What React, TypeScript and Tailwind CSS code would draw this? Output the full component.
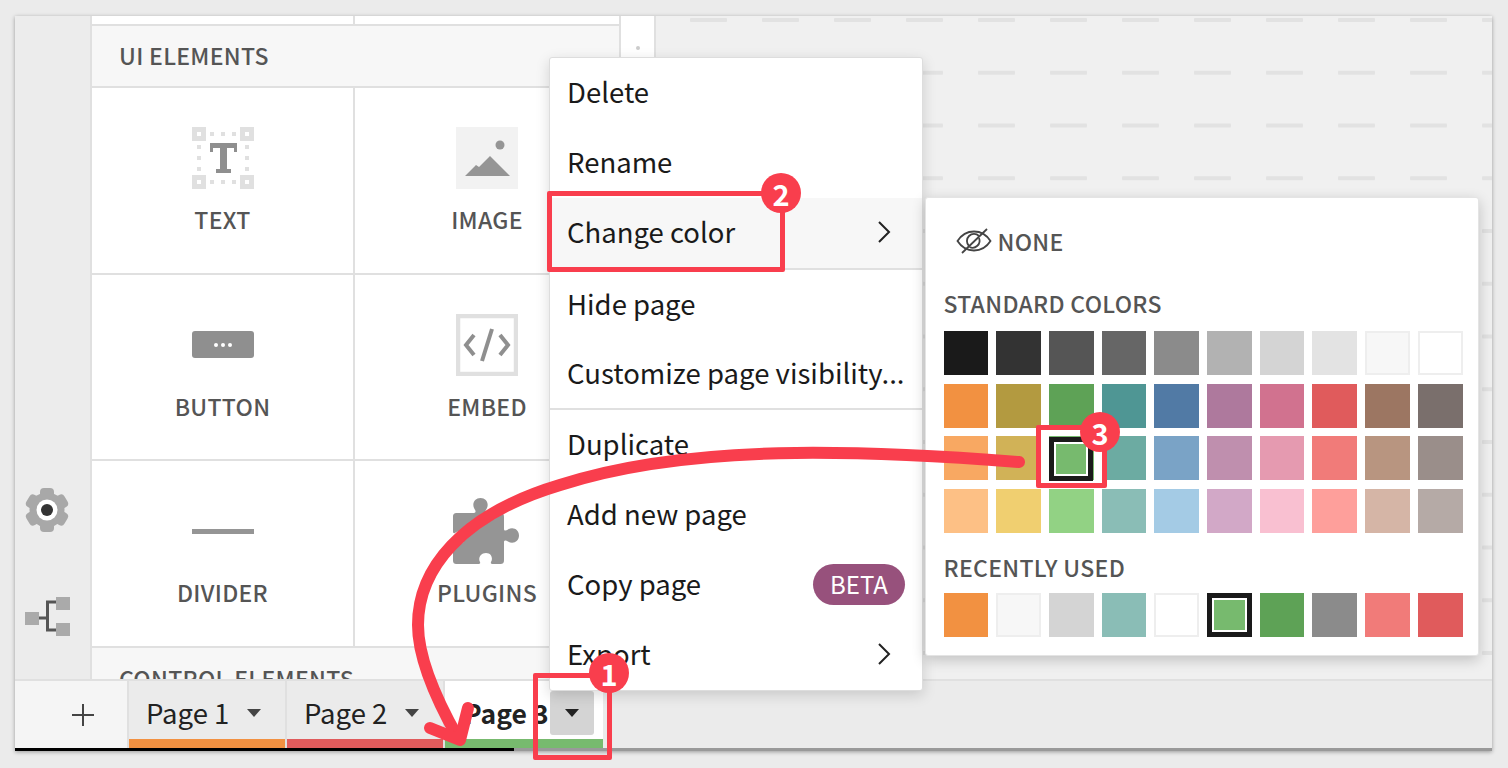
const standardColors = [
  ['#1a1a1a', '#333333', '#555555', '#666666', '#8b8b8b', '#b2b2b2', '#d4d4d4', '#e3e3e3', '#f7f7f7', '#ffffff'],
  ['#f29141', '#b39a40', '#5ea256', '#4f9694', '#517aa5', '#ae799d', '#d1728f', '#e05b5c', '#9c7662', '#7a6f6c'],
  ['#f8a862', '#d1b257', '#77ba6e', '#6caba2', '#7aa3c6', '#bf8fae', '#e59ab0', '#f17b79', '#b89580', '#9a8e8a'],
  ['#fdc085', '#f0cf70', '#92d284', '#8abdb6', '#a4cbe5', '#d2a8c7', '#f9c0d1', '#fe9f9b', '#d5b5a6', '#b5aaa6'],
];

const recentColors = ['#f29141', '#f7f7f7', '#d4d4d4', '#8abdb6', '#ffffff', '#77ba6e', '#5ea256', '#8b8b8b', '#f17b79', '#e05b5c'];

function Swatch({ color, selected }: { color: string; selected?: boolean }) {
  const pale = color === '#f7f7f7' || color === '#ffffff';
  if (selected) {
    return (
      <div className="h-11 border-[5px] border-[#1a1a1a] bg-white p-[2px]">
        <div className="h-full w-full" style={{ backgroundColor: color }} />
      </div>
    );
  }
  return (
    <div
      className={pale ? 'h-11 border-2 border-[#eeeeee]' : 'h-11'}
      style={{ backgroundColor: color }}
    />
  );
}

function TextIcon() {
  return (
    <svg width="62" height="62" viewBox="0 0 62 62">
      <g fill="#e0e0e0">
        <path fillRule="evenodd" d="M0 0h14v14H0zM5 5v4h4V5z" />
        <path fillRule="evenodd" d="M48 0h14v14H48zM53 5v4h4V5z" />
        <path fillRule="evenodd" d="M0 48h14v14H0zM5 53v4h4v-4z" />
        <path fillRule="evenodd" d="M48 48h14v14H48zM53 53v4h4v-4z" />
        {[18, 29, 40].map((p) => (
          <g key={p}>
            <rect x={p} y="5" width="4" height="4" />
            <rect x={p} y="53" width="4" height="4" />
            <rect x="5" y={p} width="4" height="4" />
            <rect x="53" y={p} width="4" height="4" />
          </g>
        ))}
      </g>
      <path
        fill="#8f8f8f"
        d="M18 16h27v9h-3v-4h-7v21h4v4H24v-4h4V21h-7v4h-3z"
      />
    </svg>
  );
}

function ImageIcon() {
  return (
    <svg width="62" height="62" viewBox="0 0 62 62">
      <rect width="62" height="62" fill="#f2f2f2" />
      <circle cx="44" cy="18" r="4.500" fill="#959595" />
      <path fill="#959595" d="M9 49l11-11 3 2 11-11 20 20z" />
    </svg>
  );
}

function ButtonIcon() {
  return (
    <div className="flex h-[27px] w-[62px] items-center justify-center gap-[3px] rounded-[3px] bg-[#8f8f8f]">
      <span className="h-1 w-1 rounded-full bg-white" />
      <span className="h-1 w-1 rounded-full bg-white" />
      <span className="h-1 w-1 rounded-full bg-white" />
    </div>
  );
}

function EmbedIcon() {
  return (
    <svg width="62" height="62" viewBox="0 0 62 62">
      <rect x="2" y="2" width="58" height="58" fill="#fff" stroke="#e0e0e0" strokeWidth="4.500" />
      <g fill="none" stroke="#8f8f8f" strokeWidth="4">
        <path d="M18 21L10 31l8 10" />
        <path d="M44 21l8 10-8 10" />
        <path d="M36 15l-10 32" />
      </g>
    </svg>
  );
}

function PuzzleIcon() {
  return (
    <svg width="68" height="68" viewBox="0 0 68 68">
      <path
        fill="#959595"
        d="M4 16h17c2 0 2-2 .500-4-3-5 0-11 6-11s9 6 6 11c-1.500 2-1.500 4 .500 4h13c3 0 4 1 4 4v12c0 2 2 2 4 .500 5-3 11 0 11 6s-6 9-11 6c-2-1.500-4-1.500-4 .500v18c0 3-1 4-4 4H39c-1 0-1.500-1-1-2 2-3 1-9-5-9s-8 6-6 9c.500 1 0 2-1 2H4c-3 0-4-1-4-4V47c0-1 1-1.500 2-1 3 2 9 2 10-5 .500-6-6-8-10-5-1 .500-2 0-2-1V20c0-3 1-4 4-4z"
      />
    </svg>
  );
}

function GearIcon() {
  return (
    <svg width="44" height="46" viewBox="0 0 44 46">
      <g fill="#a8a8a8">
        <circle cx="22" cy="23" r="17.500" />
        {[0, 60, 120, 180, 240, 300].map((a) => (
          <rect key={a} x="15" y="1" width="14" height="12" rx="4" transform={`rotate(${a} 22 23)`} />
        ))}
      </g>
      <circle cx="22" cy="23" r="10.500" fill="#fff" />
      <circle cx="22" cy="23" r="6" fill="#333" />
    </svg>
  );
}

function TreeIcon() {
  return (
    <svg width="46" height="42" viewBox="0 0 46 42">
      <path fill="none" stroke="#555" strokeWidth="3" d="M14 22h8.500M32 6H22.500v28H32" />
      <rect x="0" y="16" width="14" height="13" fill="#aaa" />
      <rect x="31" y="1" width="14" height="13" fill="#aaa" />
      <rect x="31" y="27" width="14" height="13" fill="#aaa" />
    </svg>
  );
}

function Caret({ color = '#444' }: { color?: string }) {
  return (
    <svg width="16" height="8" viewBox="0 0 16 8">
      <path d="M1 0h14L8 8z" fill={color} />
    </svg>
  );
}

function Chevron() {
  return (
    <svg width="14" height="22" viewBox="0 0 14 22" fill="none" stroke="#222" strokeWidth="2">
      <path d="M2 1l10 10-10 10" />
    </svg>
  );
}

function EyeOff() {
  return (
    <svg width="36" height="26" viewBox="0 0 36 26" fill="none" stroke="#444" strokeWidth="1.800">
      <path d="M1.500 13C6 6 11.500 3.500 18 3.500S30 6 34.500 13C30 20 24.500 22.500 18 22.500S6 20 1.500 13z" />
      <path d="M23 8a7 7 0 0 0-10 10M13.500 19a7 7 0 0 0 9.500-9" />
      <path d="M31 1L6 25" />
    </svg>
  );
}

function Tile({ label, icon, last }: { label: string; icon: React.ReactNode; last?: boolean }) {
  return (
    <div className={`flex h-[186.500px] flex-col items-center border-b-2 border-[#e0e0e0] pt-[39px] ${last ? '' : 'border-r-2'}`}>
      <div className="flex h-[62px] items-center justify-center">{icon}</div>
      <div className="mt-[15px] text-[23px] leading-[30px] font-medium tracking-[0.3px] text-[#555]">{label}</div>
    </div>
  );
}

function MenuItem({ label, chevron, badge, active, short }: { label: string; chevron?: boolean; badge?: boolean; active?: boolean; short?: boolean }) {
  return (
    <div className={`flex items-center justify-between pr-[17px] pb-[2px] pl-[17px] text-[27.500px] whitespace-nowrap text-[#1a1a1a] ${short ? 'h-[68px]' : 'h-[70px]'} ${active ? 'bg-[#f7f7f7]' : ''}`}>
      <span>{label}</span>
      {chevron && <span className="pr-[14px]"><Chevron /></span>}
      {badge && (
        <span className="flex h-[41px] w-[92px] items-center justify-center rounded-full bg-[#97517c] text-[24px] text-white">BETA</span>
      )}
    </div>
  );
}

function PageTab({ label, color }: { label: string; color: string }) {
  return (
    <div className="flex w-[158px] flex-col border-l-2 border-[#e0e0e0]">
      <div className="flex h-[58px] items-center pt-[6px] pl-[17px] text-[27.500px] text-[#222]">
        <span className="w-[100px] whitespace-nowrap">{label}</span>
        <Caret />
      </div>
      <div className="h-[9px]" style={{ backgroundColor: color }} />
    </div>
  );
}

function Badge({ n, className }: { n: number; className: string }) {
  return (
    <div className={`absolute flex h-10 w-10 items-center justify-center rounded-full bg-[#f93e4d] text-[29px] leading-none font-bold text-white ${className}`}>
      {n}
    </div>
  );
}

export default function App() {
  return (
    <div
      className="relative h-[768px] w-[1508px] overflow-hidden bg-[#ebebeb] pt-4 pl-[15px]"
      style={{ fontFamily: '"Noto Sans CJK SC", "Noto Sans", sans-serif' }}
    >
      {/* App frame */}
      <div className="flex h-[735px] w-[1477px] flex-col overflow-hidden bg-[#f0f0f0] shadow-[0_1px_4px_rgba(0,0,0,0.35)]">
        <div className="flex min-h-0 flex-1">
          {/* Left rail */}
          <div className="flex w-[77px] shrink-0 flex-col items-start border-r-2 border-[#e0e0e0] bg-[#ececec] pt-[471px] pl-[10px]">
            <GearIcon />
            <div className="mt-[63px]">
              <TreeIcon />
            </div>
          </div>

          {/* Elements panel */}
          <div className="w-[527px] shrink-0 overflow-hidden bg-white">
            <div className="grid h-[10px] grid-cols-[263px_1fr] border-b-2 border-[#e0e0e0]">
              <div className="border-r-2 border-[#e0e0e0]" />
              <div />
            </div>
            <div className="flex h-[62px] items-center border-b-2 border-[#e0e0e0] bg-[#f7f7f7] pb-[2px] pl-[27px] text-[23px] font-medium tracking-[0.3px] text-[#555]">
              UI ELEMENTS
            </div>
            <div className="grid grid-cols-[263px_1fr]">
              <Tile label="TEXT" icon={<TextIcon />} />
              <Tile label="IMAGE" icon={<ImageIcon />} last />
              <Tile label="BUTTON" icon={<ButtonIcon />} />
              <Tile label="EMBED" icon={<EmbedIcon />} last />
              <Tile label="DIVIDER" icon={<div className="h-[5px] w-[62px] bg-[#959595]" />} />
              <Tile label="PLUGINS" icon={<PuzzleIcon />} last />
            </div>
            <div className="h-[40px] bg-[#f7f7f7] pt-[13px] pl-[27px] text-[23px] font-medium tracking-[0.3px] text-[#555]">
              CONTROL ELEMENTS
            </div>
          </div>

          {/* Narrow strip */}
          <div className="flex w-[37px] shrink-0 justify-center border-x-2 border-[#e0e0e0] bg-white pt-[30px]">
            <span className="h-1 w-1 rounded-full bg-[#ccc]" />
          </div>

          {/* Canvas */}
          <div className="min-w-0 flex-1">
            <svg width="100%" height="100%">
              <defs>
                <pattern id="dashes" x="34" y="2" width="72" height="52.750" patternUnits="userSpaceOnUse">
                  <rect width="37" height="4" rx="1" fill="#e2e2e2" />
                </pattern>
              </defs>
              <rect width="100%" height="100%" fill="url(#dashes)" />
            </svg>
          </div>
        </div>

        {/* Page tabs */}
        <div className="flex h-[69px] shrink-0 border-t-2 border-[#e0e0e0] bg-[#ebebeb]">
          <div className="flex w-[112px] items-center justify-center bg-[#f5f5f5] pl-[24px] text-[#444]">
            <svg width="24" height="24" viewBox="0 0 24 24" stroke="#444" strokeWidth="2">
              <path d="M12 1v22M1 12h22" />
            </svg>
          </div>
          <PageTab label="Page 1" color="#f29141" />
          <PageTab label="Page 2" color="#e05b5c" />
          <div className="flex w-[160px] flex-col border-l-2 border-[#e0e0e0] bg-white">
            <div className="flex h-[58px] items-center justify-between pt-[6px] pr-[9px] pl-[19px] text-[26.500px] font-semibold whitespace-nowrap text-[#222]">
              <span>Page 3</span>
              <span className="flex h-11 w-11 items-center justify-center rounded-[3px] bg-[#d4d4d4]">
                <Caret color="#222" />
              </span>
            </div>
            <div className="h-[9px] bg-[#77ba6e]" />
          </div>
        </div>
        <div className="h-[3px] shrink-0 bg-[linear-gradient(90deg,#000_499px,#999_499px)]" />
      </div>

      {/* Page context menu */}
      <div className="absolute top-[57px] left-[549px] w-[374px] rounded-[3px] border border-[#dddddd] bg-white shadow-[0_4px_14px_rgba(0,0,0,0.15)]">
        <MenuItem label="Delete" />
        <MenuItem label="Rename" />
        <MenuItem label="Change color" chevron active />
        <div className="h-[2px] bg-[#e0e0e0]" />
        <MenuItem label="Hide page" />
        <MenuItem label="Customize page visibility..." short />
        <div className="h-[2px] bg-[#e0e0e0]" />
        <MenuItem label="Duplicate" />
        <MenuItem label="Add new page" />
        <MenuItem label="Copy page" badge />
        <MenuItem label="Export" chevron />
      </div>

      {/* Color picker */}
      <div className="absolute top-[197px] left-[925px] h-[459px] w-[554px] rounded-[3px] border border-[#e4e4e4] bg-white pt-[23px] pr-[15.500px] pl-[17.500px] shadow-[0_4px_14px_rgba(0,0,0,0.2)]">
        <div className="flex h-10 items-center gap-[6px] pl-[12px] text-[23px] font-medium tracking-[0.3px] text-[#555]">
          <EyeOff />
          NONE
        </div>
        <div className="mt-[26px] text-[23px] leading-[32px] font-medium tracking-[0.3px] text-[#555]">STANDARD COLORS</div>
        <div className="mt-[12px] grid grid-cols-10 gap-x-2 gap-y-[8.700px]">
          {standardColors.map((row, r) =>
            row.map((color, c) => (
              <Swatch key={`${r}-${c}`} color={color} />
            )),
          )}
        </div>
        <div className="mt-[18px] text-[23px] leading-[32px] font-medium tracking-[0.3px] text-[#555]">RECENTLY USED</div>
        <div className="mt-[10px] grid grid-cols-10 gap-x-2">
          {recentColors.map((color, i) => (
            <Swatch key={i} color={color} selected={i === 5} />
          ))}
        </div>
      </div>

      {/* Selected swatch in the standard grid */}
      <div className="absolute top-[437px] left-[1048.500px] w-[44.700px]">
        <Swatch color="#77ba6e" selected />
      </div>

      {/* Callouts */}
      <div className="absolute top-[673px] left-[533px] h-[87px] w-[79px] rounded-[2px] border-[5px] border-[#f93e4d]" />
      <div className="absolute top-[191px] left-[547px] h-[81px] w-[238px] rounded-[2px] border-[5px] border-[#f93e4d]" />
      <div className="absolute top-[425px] left-[1036px] h-[63px] w-[71px] rounded-[2px] border-[5px] border-[#f93e4d]" />
      <Badge n={1} className="top-[653px] left-[589px]" />
      <Badge n={2} className="top-[173px] left-[761px]" />
      <Badge n={3} className="top-[412px] left-[1080px]" />

      <svg className="pointer-events-none absolute top-0 left-0" width="1508" height="768" fill="none" stroke="#f93e4d" strokeWidth="12" strokeLinecap="round" strokeLinejoin="round">
        <path d="M1019 462C860 450 690 443 560 485C460 515 418 570 418 625C418 665 445 715 458 738" />
        <path d="M430 728L460 740L468 708" />
      </svg>
    </div>
  );
}
